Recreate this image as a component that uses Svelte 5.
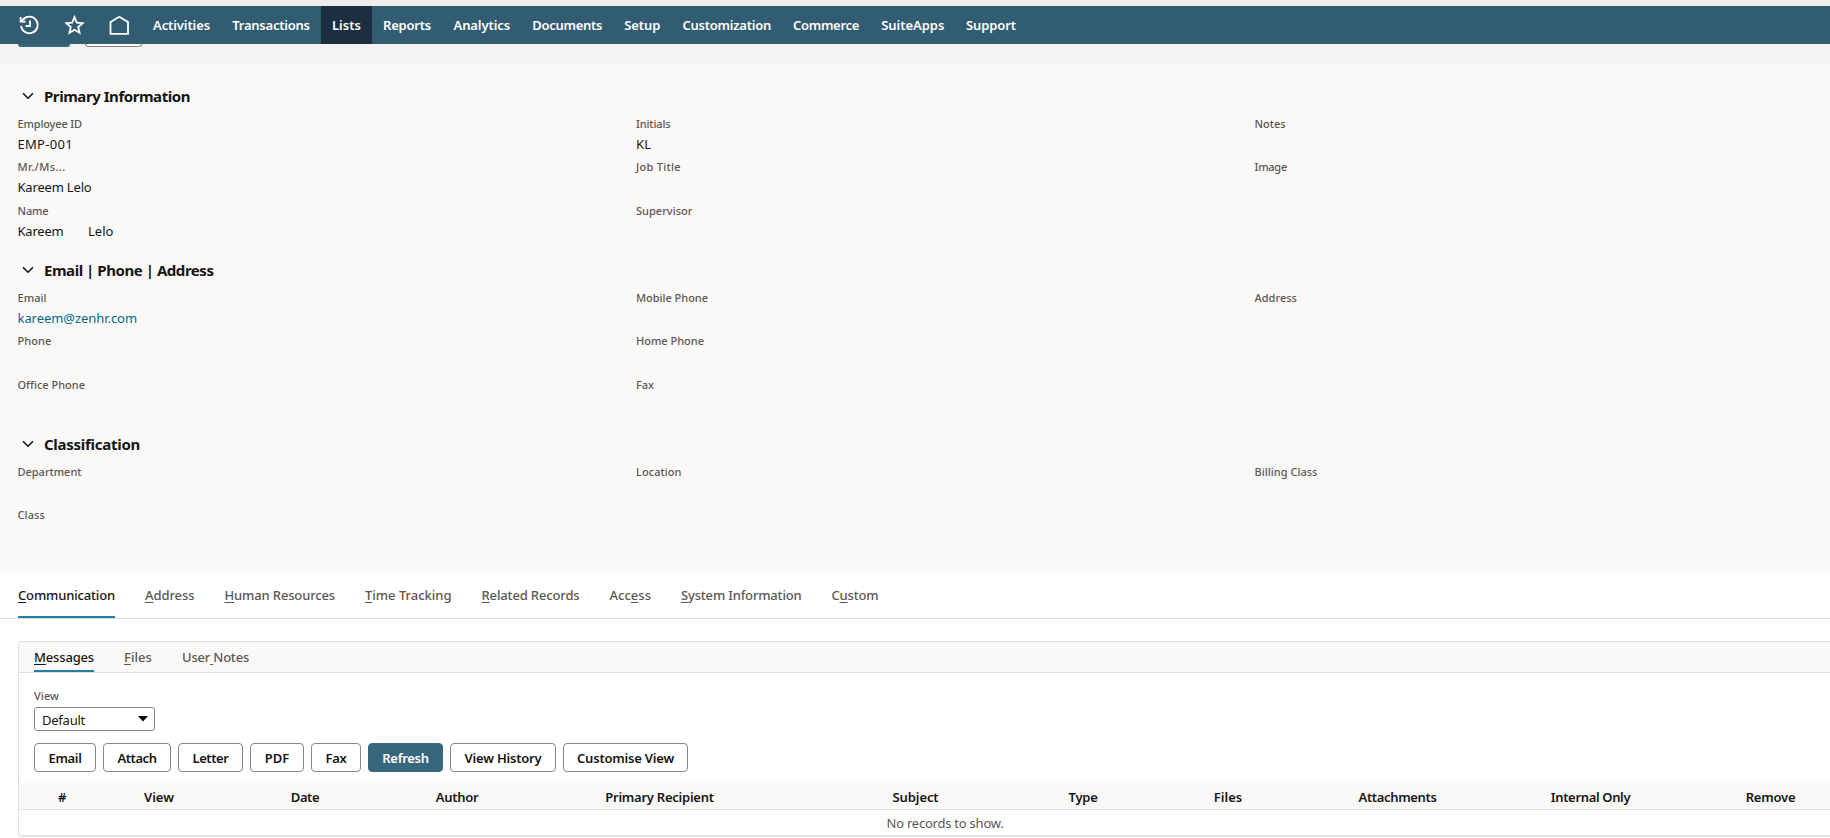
<script>
    const menu = [
        { label: "Activities", box: 79, text: 57 },
        { label: "Transactions", box: 100, text: 77.5 },
        { label: "Lists", box: 51, text: 29, active: true },
        { label: "Reports", box: 70, text: 48 },
        { label: "Analytics", box: 79.5, text: 56.5 },
        { label: "Documents", box: 91.5, text: 70 },
        { label: "Setup", box: 58.5, text: 36 },
        { label: "Customization", box: 110.5, text: 88.5 },
        { label: "Commerce", box: 88, text: 66 },
        { label: "SuiteApps", box: 85.5, text: 63 },
        { label: "Support", box: 71, text: 50 },
    ];

    const sections = [
        {
            title: "Primary Information",
            width: 146,
            rows: [
                [
                    { label: "Employee ID", width: 64.5, value: "EMP-001", valueWidth: 55.5 },
                    { label: "Initials", width: 34.5, value: "KL", valueWidth: 15.5 },
                    { label: "Notes", width: 31 },
                ],
                [
                    { label: "Mr./Ms...", width: 48, value: "Kareem Lelo", valueWidth: 74 },
                    { label: "Job Title", width: 45 },
                    { label: "Image", width: 32.5 },
                ],
                [
                    { label: "Name", width: 31, value: "Kareem", valueWidth: 46, second: "Lelo", secondWidth: 25.5 },
                    { label: "Supervisor", width: 56.5 },
                ],
            ],
        },
        {
            title: "Email | Phone | Address",
            width: 169.5,
            rows: [
                [
                    { label: "Email", width: 29, value: "kareem@zenhr.com", valueWidth: 119.5, link: true },
                    { label: "Mobile Phone", width: 72 },
                    { label: "Address", width: 42.5 },
                ],
                [
                    { label: "Phone", width: 34 },
                    { label: "Home Phone", width: 68 },
                ],
                [
                    { label: "Office Phone", width: 67.5 },
                    { label: "Fax", width: 18 },
                ],
            ],
        },
        {
            title: "Classification",
            width: 96,
            rows: [
                [
                    { label: "Department", width: 64 },
                    { label: "Location", width: 45.5 },
                    { label: "Billing Class", width: 63 },
                ],
                [{ label: "Class", width: 27.5 }],
            ],
        },
    ];

    // pre / key / post: the key letter is the underlined access key
    const tabs = [
        { pre: "", key: "C", post: "ommunication", width: 97, active: true },
        { pre: "", key: "A", post: "ddress", width: 49.5 },
        { pre: "", key: "H", post: "uman Resources", width: 110.5 },
        { pre: "", key: "T", post: "ime Tracking", width: 86.5 },
        { pre: "", key: "R", post: "elated Records", width: 98 },
        { pre: "Acc", key: "e", post: "ss", width: 41.5 },
        { pre: "", key: "S", post: "ystem Information", width: 120.5 },
        { pre: "C", key: "u", post: "stom", width: 47 },
    ];

    const subtabs = [
        { pre: "", key: "M", post: "essages", width: 60, active: true },
        { pre: "", key: "F", post: "iles", width: 28 },
        { pre: "User", key: " ", post: "Notes", width: 67 },
    ];

    const buttons = [
        { label: "Email", box: 62, text: 33 },
        { label: "Attach", box: 68, text: 39 },
        { label: "Letter", box: 65, text: 36 },
        { label: "PDF", box: 54, text: 24.5 },
        { label: "Fax", box: 50, text: 21 },
        { label: "Refresh", box: 75, text: 46.5, primary: true },
        { label: "View History", box: 106, text: 77 },
        { label: "Customise View", box: 125, text: 97 },
    ];

    const columns = [
        { label: "#", box: 87, text: 9 },
        { label: "View", box: 106, text: 30 },
        { label: "Date", box: 186, text: 28.5 },
        { label: "Author", box: 118, text: 42.5 },
        { label: "Primary Recipient", box: 287, text: 108.5 },
        { label: "Subject", box: 225, text: 46 },
        { label: "Type", box: 110, text: 29 },
        { label: "Files", box: 180, text: 28.5 },
        { label: "Attachments", box: 159, text: 78 },
        { label: "Internal Only", box: 227, text: 79.5 },
        { label: "Remove", box: 133, text: 49.5 },
    ];

    // spread the letters so the text fills the given width
    function fit(node, width) {
        const natural = node.getBoundingClientRect().width;
        node.style.letterSpacing = (width - natural) / node.textContent.length + "px";
    }
</script>

<div class="page">
    <nav>
        <div class="icons">
            <svg width="22" height="22" viewBox="0 0 22 22">
                <path d="M5 5.6A8.3 8.3 0 1 1 3.1 11.8" />
                <path d="M2.6 3V7.7H7.6M3 7.4L6 4.6M12 6.4V12H7.6" />
            </svg>
            <svg width="22" height="22" viewBox="0 0 22 22">
                <path d="M11.5 3.2L13.8 8.7L19.6 9.2L15.2 13L16.6 18.9L11.5 15.8L6.4 18.9L7.8 13L3.4 9.2L9.2 8.7Z" />
            </svg>
            <svg width="22" height="22" viewBox="0 0 22 22">
                <path d="M2.5 19.8V8.1L11.3 2.8L20 8.1V19.8Z" />
            </svg>
        </div>
        {#each menu as item}
            <a href="#top" class:active={item.active} style:width="{item.box}px">
                <span use:fit={item.text}>{item.label}</span>
            </a>
        {/each}
    </nav>

    <div class="toolbar">
        <div class="stub primary"></div>
        <div class="stub"></div>
    </div>

    <main>
        {#each sections as section}
            <section>
                <h2>
                    <svg width="12" height="8" viewBox="0 0 12 8"><path d="M1 1.2L6 6.2L11 1.2" /></svg>
                    <span use:fit={section.width}>{section.title}</span>
                </h2>
                {#each section.rows as row}
                    <div class="row">
                        {#each row as field}
                            <div class="field">
                                <div class="label"><span use:fit={field.width}>{field.label}</span></div>
                                {#if field.value}
                                    <div class="value" class:link={field.link}>
                                        <span use:fit={field.valueWidth}>{field.value}</span>
                                        {#if field.second}
                                            <span use:fit={field.secondWidth}>{field.second}</span>
                                        {/if}
                                    </div>
                                {/if}
                            </div>
                        {/each}
                    </div>
                {/each}
            </section>
        {/each}
    </main>

    <div class="tabs">
        {#each tabs as tab}
            <div class="tab" class:active={tab.active} style:width="{tab.width}px">
                <span use:fit={tab.width}>{tab.pre}<u>{tab.key}</u>{tab.post}</span>
            </div>
        {/each}
    </div>

    <div class="panel">
        <div class="tabs subtabs">
            {#each subtabs as tab}
                <div class="tab" class:active={tab.active} style:width="{tab.width}px">
                    <span use:fit={tab.width}>{tab.pre}<u>{tab.key}</u>{tab.post}</span>
                </div>
            {/each}
        </div>

        <div class="controls">
            <div class="label"><span use:fit={25}>View</span></div>
            <div class="select">
                <span use:fit={43}>Default</span>
                <svg width="10" height="6" viewBox="0 0 10 6"><path d="M0 0H10L5 5.5Z" /></svg>
            </div>
            <div class="buttons">
                {#each buttons as button}
                    <button class:primary={button.primary} style:width="{button.box}px">
                        <span use:fit={button.text}>{button.label}</span>
                    </button>
                {/each}
            </div>
        </div>

        <div class="thead">
            {#each columns as column}
                <div style:width="{column.box}px"><span use:fit={column.text}>{column.label}</span></div>
            {/each}
        </div>
        <div class="empty"><span use:fit={117}>No records to show.</span></div>
    </div>
</div>

<style>
    .page {
        box-sizing: border-box;
        height: 838px;
        padding-top: 6px;
        overflow: hidden;
        background: linear-gradient(#efeeec 6px, #fff 6px);
        color: #161513;
        font: 13px "Noto Sans", "Open Sans", sans-serif;
    }

    span {
        white-space: pre;
    }

    nav {
        display: flex;
        height: 38px;
        background: #325c72;
    }

    .icons {
        display: flex;
        align-items: center;
        gap: 23px;
        box-sizing: border-box;
        width: 142px;
        padding-left: 18px;
    }

    .icons svg {
        fill: none;
        stroke: #fff;
        stroke-width: 1.8;
    }

    nav a {
        display: flex;
        align-items: center;
        justify-content: center;
        color: #fff;
        font-weight: 600;
        text-decoration: none;
    }

    nav a.active {
        background: #1b2f40;
    }

    .toolbar {
        display: flex;
        gap: 15px;
        height: 20px;
        padding-left: 18px;
        background: #f5f3f1;
    }

    .stub {
        box-sizing: border-box;
        width: 57px;
        height: 3px;
        border: 1px solid #8a8885;
        border-top: none;
        border-radius: 0 0 4px 4px;
        background: #fff;
    }

    .stub.primary {
        width: 52px;
        border-color: #36677d;
        background: #36677d;
    }

    main {
        box-sizing: border-box;
        height: 509px;
        padding: 18px 0 0 17.5px;
        background: #fbf9f8;
    }

    section {
        height: 174px;
    }

    h2 {
        display: flex;
        align-items: center;
        gap: 10.5px;
        height: 28px;
        margin: 0 0 4.5px 4px;
        font-size: 15px;
        font-weight: 700;
    }

    h2 svg {
        fill: none;
        stroke: #161513;
        stroke-width: 1.6;
    }

    .row {
        display: flex;
        height: 43.5px;
    }

    .field {
        flex: 0 0 618.5px;
    }

    .label {
        height: 17px;
        color: #5b5652;
        font-size: 11px;
        font-weight: 500;
        line-height: 17px;
    }

    .value {
        display: flex;
        gap: 24.5px;
        line-height: 24px;
    }

    .link {
        color: #00688c;
    }

    .tabs {
        display: flex;
        gap: 30px;
        box-sizing: border-box;
        height: 46px;
        padding-left: 18px;
        border-bottom: 1px solid #e0dedc;
    }

    .tab {
        box-sizing: border-box;
        border-bottom: 2px solid transparent;
        color: #5b5652;
        font-weight: 500;
        line-height: 45px;
    }

    .tab.active {
        border-color: #227e9e;
        color: #161513;
    }

    u {
        text-underline-offset: 2px;
        text-decoration-skip-ink: none;
    }

    .panel {
        box-sizing: border-box;
        width: 1854px;
        height: 196px;
        margin: 22px 0 0 18px;
        border: 1px solid #e0dedc;
        border-bottom: 2px solid #e2e2e2;
        border-radius: 4px;
    }

    .subtabs {
        height: 31px;
        padding-left: 15px;
        border-radius: 4px 4px 0 0;
        background: #fbf9f8;
    }

    .subtabs .tab {
        line-height: 31px;
    }

    .controls {
        box-sizing: border-box;
        height: 110px;
        padding: 14px 0 0 15px;
    }

    .select {
        display: flex;
        align-items: center;
        justify-content: space-between;
        box-sizing: border-box;
        width: 121px;
        height: 24px;
        margin-top: 3px;
        padding: 0 6px 0 7px;
        border: 1px solid #8a8885;
        border-radius: 3px;
    }

    .select span {
        padding-top: 2px;
    }

    .buttons {
        display: flex;
        gap: 7px;
        margin-top: 12px;
    }

    button {
        display: flex;
        align-items: center;
        justify-content: center;
        box-sizing: border-box;
        height: 29px;
        padding: 0;
        border: 1px solid #8a8885;
        border-radius: 4px;
        background: #fff;
        color: #161513;
        font: inherit;
        font-weight: 600;
    }

    button.primary {
        border-color: #36677d;
        background: #36677d;
        color: #fff;
    }

    .thead {
        display: flex;
        box-sizing: border-box;
        height: 27px;
        border-bottom: 1px solid #e0dedc;
        background: #fbf9f8;
        font-weight: 600;
        line-height: 28px;
        text-align: center;
    }

    .empty {
        color: #5b5652;
        line-height: 26px;
        text-align: center;
    }
</style>
